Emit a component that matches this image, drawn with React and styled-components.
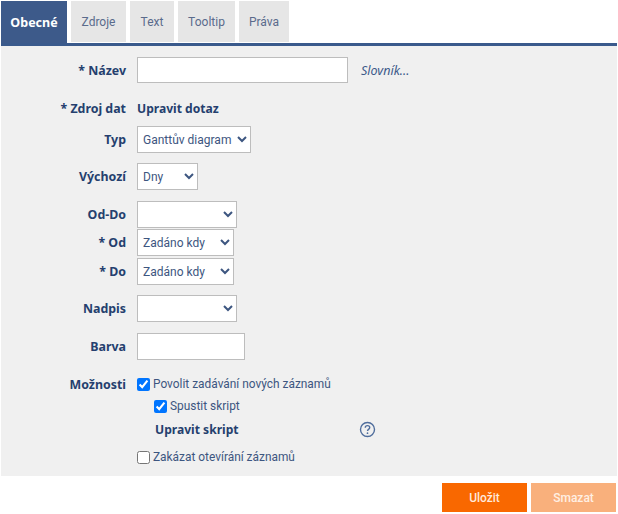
import styled, { createGlobalStyle } from 'styled-components';

const GlobalStyle = createGlobalStyle`
    html, body {
        margin: 0;
        padding: 0;
        background: #FFFFFF;
        font-family: "Noto Sans", "DejaVu Sans", sans-serif;
    }
`;

const tabs = [
    { name: "Obecné", width: 66 },
    { name: "Zdroje", width: 55 },
    { name: "Text", width: 44 },
    { name: "Tooltip", width: 57 },
    { name: "Práva", width: 50 },
];

export default function App(){
    return(
        <Page>
            <GlobalStyle />
            <TabBar>
                {tabs.map((tab, i) => <Tab key={tab.name} $active={i === 0} $width={tab.width}>{tab.name}</Tab>)}
            </TabBar>
            <Panel>
                <Row $height={26} $top={11}>
                    <Label>* Název</Label>
                    <TextInput $width={211} />
                    <DictionaryLink>Slovník...</DictionaryLink>
                </Row>
                <Row $height={20} $top={15}>
                    <Label>* Zdroj dat</Label>
                    <ActionLink>Upravit dotaz</ActionLink>
                </Row>
                <Row $height={27} $top={8}>
                    <Label>Typ</Label>
                    <Select $width={114} defaultValue="Ganttův diagram">
                        <option>Ganttův diagram</option>
                    </Select>
                </Row>
                <Row $height={27} $top={10}>
                    <Label>Výchozí</Label>
                    <Select $width={61} defaultValue="Dny">
                        <option>Dny</option>
                    </Select>
                </Row>
                <Row $height={27} $top={11}>
                    <Label>Od-Do</Label>
                    <Select $width={100}>
                        <option></option>
                    </Select>
                </Row>
                <Row $height={27} $top={1}>
                    <Label>* Od</Label>
                    <Select $width={97} defaultValue="Zadáno kdy">
                        <option>Zadáno kdy</option>
                    </Select>
                </Row>
                <Row $height={27} $top={2}>
                    <Label>* Do</Label>
                    <Select $width={97} defaultValue="Zadáno kdy">
                        <option>Zadáno kdy</option>
                    </Select>
                </Row>
                <Row $height={27} $top={10}>
                    <Label>Nadpis</Label>
                    <Select $width={100}>
                        <option></option>
                    </Select>
                </Row>
                <Row $height={27} $top={11}>
                    <Label>Barva</Label>
                    <TextInput $width={108} />
                </Row>
                <Row $height={18} $top={15}>
                    <Label>Možnosti</Label>
                    <CheckLabel>
                        <CheckBox type="checkbox" defaultChecked />
                        Povolit zadávání nových záznamů
                    </CheckLabel>
                </Row>
                <Row $height={18} $top={4}>
                    <Label />
                    <CheckLabel $indent={17}>
                        <CheckBox type="checkbox" defaultChecked />
                        Spustit skript
                    </CheckLabel>
                </Row>
                <Row $height={20} $top={4}>
                    <Label />
                    <ScriptLink>Upravit skript</ScriptLink>
                    <HelpIcon viewBox="0 0 16 16" aria-hidden="true">
                        <circle cx="8" cy="8" r="6.6" />
                        <path d="M5.9 6.3c0-1.2 1-2 2.1-2s2.1.8 2.1 1.9c0 1.6-2.1 1.7-2.1 3.2" />
                        <circle className="dot" cx="8" cy="11.5" r="0.8" />
                    </HelpIcon>
                </Row>
                <Row $height={18} $top={9}>
                    <Label />
                    <CheckLabel>
                        <CheckBox type="checkbox" />
                        Zakázat otevírání záznamů
                    </CheckLabel>
                </Row>
            </Panel>
            <Footer>
                <Button>Uložit</Button>
                <Button $disabled>Smazat</Button>
            </Footer>
        </Page>
    );
}

const Page = styled.div`
    width: 618px;
    height: 514px;
    overflow: hidden;
    padding-left: 1px;
    box-sizing: border-box;
`;

const TabBar = styled.div`
    display: flex;
    gap: 4px;
    height: 43px;
    padding-top: 1px;
    box-sizing: border-box;
`;

const Tab = styled.div`
    display: flex;
    align-items: center;
    justify-content: center;
    width: ${props => props.$width}px;
    height: ${props => props.$active ? "42px" : "41px"};
    padding-top: 1px;
    box-sizing: border-box;
    background: ${props => props.$active ? "#3D5A8A" : "#E6E6E6"};
    color: ${props => props.$active ? "#FFFFFF" : "#5A6B8C"};
    font-family: ${props => props.$active ? '"Noto Sans", sans-serif' : 'Roboto, sans-serif'};
    font-size: ${props => props.$active ? "12.5px" : "12px"};
    font-weight: ${props => props.$active ? 700 : 400};
`;

const Panel = styled.div`
    width: 616px;
    height: 433px;
    box-sizing: border-box;
    background: #F0F0F0;
    border-top: 3px solid #3A5A8C;
    overflow: hidden;
`;

const Row = styled.div`
    display: flex;
    align-items: center;
    height: ${props => props.$height}px;
    margin-top: ${props => props.$top}px;
`;

const Label = styled.div`
    width: 125px;
    flex: none;
    margin-right: 11px;
    text-align: right;
    font-size: 12.4px;
    font-weight: 700;
    color: #253F6E;
`;

const TextInput = styled.input`
    width: ${props => props.$width}px;
    height: 100%;
    box-sizing: border-box;
    background: #FFFFFF;
    border: 1px solid #BDBDBD;
    outline: none;
`;

const Select = styled.select`
    width: ${props => props.$width}px;
    height: 100%;
    box-sizing: border-box;
    padding-left: 1px;
    background: #FFFFFF;
    border: 1px solid #BDBDBD;
    border-radius: 0;
    outline: none;
    font-family: Roboto, sans-serif;
    font-size: 12px;
    color: #3D5680;
`;

const DictionaryLink = styled.span`
    margin-left: 13px;
    font-size: 12.5px;
    font-style: italic;
    color: #3D5A8A;
`;

const ActionLink = styled.span`
    font-size: 12.1px;
    font-weight: 700;
    color: #253F6E;
`;

const ScriptLink = styled(ActionLink)`
    margin-left: 18px;
    width: 204px;
`;

const CheckLabel = styled.label`
    display: flex;
    align-items: center;
    margin-left: ${props => props.$indent || 0}px;
    font-family: Roboto, sans-serif;
    font-size: 11.9px;
    color: #3D5680;
`;

const CheckBox = styled.input`
    width: 13px;
    height: 13px;
    margin: 0 3px 0 0;
`;

const HelpIcon = styled.svg`
    width: 17px;
    height: 17px;
    fill: none;
    stroke: #4F6D9C;
    stroke-width: 1.3;
    .dot {
        fill: #4F6D9C;
        stroke: none;
    }
`;

const Footer = styled.div`
    display: flex;
    justify-content: flex-end;
    gap: 4px;
    padding: 7px 2px 0 0;
`;

const Button = styled.div`
    display: flex;
    align-items: center;
    justify-content: center;
    width: 85px;
    height: 29px;
    background: ${props => props.$disabled ? "#F9B07C" : "#F96800"};
    color: ${props => props.$disabled ? "#FFEFE3" : "#FFE9D9"};
    font-family: Roboto, sans-serif;
    font-size: 12px;
    font-weight: 500;
`;
